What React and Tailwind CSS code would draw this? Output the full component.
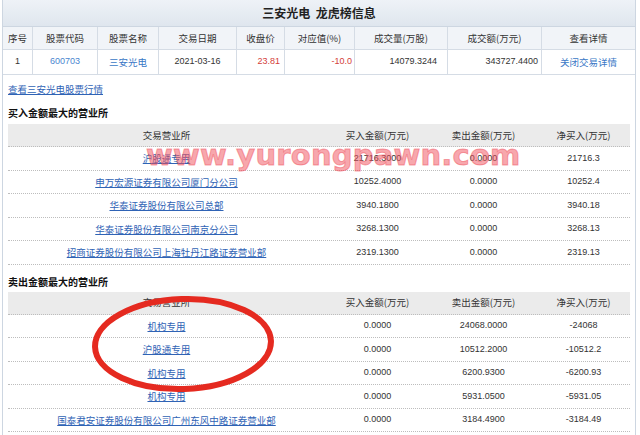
import React from "react";

const CJK = { fontFamily: '"Noto Sans CJK SC", "Noto Sans", sans-serif' };
const NUM = { fontFamily: '"Liberation Sans", "Noto Sans CJK SC", sans-serif' };

const buyRows = [
  ["沪股通专用", "21716.3000", "0.0000", "21716.3"],
  ["申万宏源证券有限公司厦门分公司", "10252.4000", "0.0000", "10252.4"],
  ["华泰证券股份有限公司总部", "3940.1800", "0.0000", "3940.18"],
  ["华泰证券股份有限公司南京分公司", "3268.1300", "0.0000", "3268.13"],
  ["招商证券股份有限公司上海牡丹江路证券营业部", "2319.1300", "0.0000", "2319.13"],
];

const sellRows = [
  ["机构专用", "0.0000", "24068.0000", "-24068"],
  ["沪股通专用", "0.0000", "10512.2000", "-10512.2"],
  ["机构专用", "0.0000", "6200.9300", "-6200.93"],
  ["机构专用", "0.0000", "5931.0500", "-5931.05"],
  ["国泰君安证券股份有限公司广州东风中路证券营业部", "0.0000", "3184.4900", "-3184.49"],
];

function Section({ rows }) {
  return (
    <div className="w-[622px]">
      <div className="grid grid-cols-[317px_105px_107px_93px] h-[23px] items-center bg-[#ebebeb] border-b border-dotted border-[#bdbdbd] text-[9.5px] text-[#333]">
        <div className="text-center">交易营业所</div>
        <div className="text-center">买入金额(万元)</div>
        <div className="text-center">卖出金额(万元)</div>
        <div className="text-center">净买入(万元)</div>
      </div>
      {rows.map((r, i) => (
        <div
          key={i}
          className="grid grid-cols-[317px_105px_107px_93px] h-[23.5px] items-center border-b border-dotted border-[#bdbdbd] text-[9px] text-[#333]"
        >
          <div className="text-center">
            <span className="text-[9.5px] text-[#2f63b5] underline">{r[0]}</span>
          </div>
          <div className="text-center" style={NUM}>{r[1]}</div>
          <div className="text-center" style={NUM}>{r[2]}</div>
          <div className="text-center" style={NUM}>{r[3]}</div>
        </div>
      ))}
    </div>
  );
}

export default function App() {
  const cols = "grid grid-cols-[30px_65px_61px_78px_48px_70px_93px_94px_93px]";
  return (
    <div className="relative w-[640px] h-[435px] overflow-hidden bg-white" style={CJK}>
      <div className="ml-[2px] w-[634px] h-[435px] border-x border-[#cdd6e1]">
        <div className="h-[27px] flex items-center justify-center bg-gradient-to-b from-[#eef2f7] to-[#dfe6ee] border-b border-[#cdd6e1] text-[12px] font-bold text-[#222]">
          三安光电&nbsp;&nbsp;龙虎榜信息
        </div>
        <div className={`${cols} h-[23px] bg-[#f1f4f8] border-b border-[#d5dce5] text-[9.5px] text-[#333]`}>
          {["序号", "股票代码", "股票名称", "交易日期", "收盘价", "对应值(%)", "成交量(万股)", "成交额(万元)", "查看详情"].map((h, i) => (
            <div key={i} className={`flex items-center justify-center ${i < 8 ? "border-r border-[#d5dce5]" : ""}`}>{h}</div>
          ))}
        </div>
        <div className={`${cols} h-[25px] border-b border-[#d5dce5] text-[9px] text-[#333]`}>
          <div className="flex items-center justify-center border-r border-[#d5dce5]" style={NUM}>1</div>
          <div className="flex items-center justify-center border-r border-[#d5dce5] text-[#4a86cf]" style={NUM}>600703</div>
          <div className="flex items-center justify-center border-r border-[#d5dce5] text-[9.5px] text-[#3a78c6]">三安光电</div>
          <div className="flex items-center justify-center border-r border-[#d5dce5]" style={NUM}>2021-03-16</div>
          <div className="flex items-center justify-end pr-[4px] border-r border-[#d5dce5] text-[#d4403a]" style={NUM}>23.81</div>
          <div className="flex items-center justify-end pr-[2px] border-r border-[#d5dce5] text-[#d4403a]" style={NUM}>-10.0</div>
          <div className="flex items-center justify-end pr-[10px] border-r border-[#d5dce5]" style={NUM}>14079.3244</div>
          <div className="flex items-center justify-end pr-[3px] border-r border-[#d5dce5]" style={NUM}>343727.4400</div>
          <div className="flex items-center justify-center text-[9.5px] text-[#3a78c6]">关闭交易详情</div>
        </div>
        <div className="px-[5px]">
          <div className="mt-[7px] h-[14px] leading-[14px] text-[9.5px] text-[#2f63b5] underline">查看三安光电股票行情</div>
          <div className="mt-[10px] h-[14px] leading-[14px] text-[10px] font-bold text-[#111]">买入金额最大的营业所</div>
          <div className="mt-[4px]">
            <Section rows={buyRows} />
          </div>
          <div className="mt-[10px] h-[14px] leading-[14px] text-[10px] font-bold text-[#111]">卖出金额最大的营业所</div>
          <div className="mt-[3px]">
            <Section rows={sellRows} />
          </div>
        </div>
      </div>

      <div
        className="absolute left-[146px] top-[141px] text-[29px] leading-[29px] font-bold tracking-[0.2px] text-[rgba(240,80,92,0.5)] whitespace-nowrap pointer-events-none"
        style={{ fontFamily: '"DejaVu Sans", sans-serif', WebkitTextStroke: "1px rgba(240,80,92,0.5)" }}
      >
        www.yurongpawn.com
      </div>

      <svg className="absolute left-0 top-0 pointer-events-none" width="640" height="435">
        <ellipse cx="183" cy="344" rx="88" ry="45" fill="none" stroke="#e52a20" strokeWidth="6" transform="rotate(-2 183 344)" />
      </svg>
    </div>
  );
}
